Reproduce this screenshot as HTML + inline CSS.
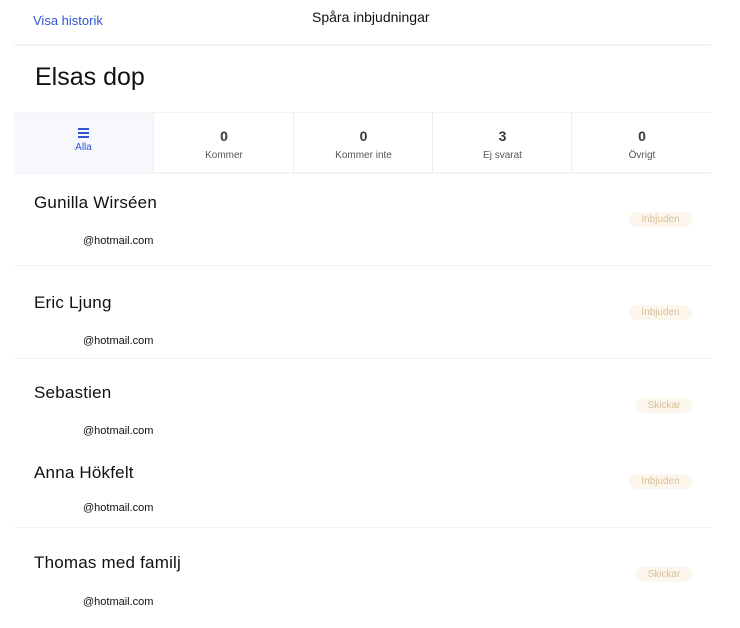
<!DOCTYPE html>
<html><head><style>
body{margin:0;width:740px;height:628px;background:#fff;font-family:"Liberation Sans",sans-serif;position:relative;overflow:hidden}
.a{position:absolute;white-space:nowrap}
.hr{position:absolute;left:14px;width:697px;height:2px;background:#f3f3f5}
.name{position:absolute;left:34px;font-size:17px;color:#111;letter-spacing:0.2px}
.mail{position:absolute;left:83px;font-size:11px;color:#111}
.badge{position:absolute;right:48px;height:15px;line-height:15px;border-radius:8px;background:#fcf6ec;color:#d8c09a;font-size:10px;text-align:center}
.col{position:absolute;top:113px;height:60px;text-align:center;border-left:1px solid #eceef2}
.col .n{position:absolute;top:15px;width:100%;font-size:14px;font-weight:bold;color:#333a48}
.col .l{position:absolute;top:36px;width:100%;font-size:10px;color:#555}
</style></head><body>
<div class="a" style="left:33px;top:13px;font-size:13px;color:#2f55d4">Visa historik</div>
<div class="a" style="left:312px;top:9px;font-size:14px;color:#111">Spåra inbjudningar</div>
<div class="hr" style="top:44px"></div>
<div class="a" style="left:35px;top:63px;font-size:25px;color:#111">Elsas dop</div>
<div class="hr" style="top:112px;height:1px"></div>
<div class="col" style="left:14px;width:139px;background:#f7f8fb;border-left:none">
<div style="position:absolute;left:64px;top:15px;width:11px">
<div style="height:1.5px;background:#2f55d4;margin-bottom:2.5px"></div><div style="height:1.5px;background:#2f55d4;margin-bottom:2.5px"></div><div style="height:1.5px;background:#2f55d4"></div></div>
<div class="l" style="top:29px;color:#2f55d4">Alla</div></div>
<div class="col" style="left:153px;width:140px"><div class="n">0</div><div class="l" style="top:37px">Kommer</div></div>
<div class="col" style="left:293px;width:139px"><div class="n">0</div><div class="l" style="top:37px">Kommer inte</div></div>
<div class="col" style="left:432px;width:139px"><div class="n">3</div><div class="l" style="top:37px">Ej svarat</div></div>
<div class="col" style="left:571px;width:140px"><div class="n">0</div><div class="l" style="top:37px">Övrigt</div></div>
<div class="hr" style="top:172px"></div>

<div class="name" style="top:193px">Gunilla Wirséen</div>
<div class="badge" style="top:212px;width:63px">Inbjuden</div>
<div class="mail" style="top:235px">@hotmail.com</div>
<div class="hr" style="top:265px;height:1px"></div>

<div class="name" style="top:293px">Eric Ljung</div>
<div class="badge" style="top:305px;width:63px">Inbjuden</div>
<div class="mail" style="top:335px">@hotmail.com</div>
<div class="hr" style="top:358px;height:1px"></div>

<div class="name" style="top:383px">Sebastien</div>
<div class="badge" style="top:398px;width:56px">Skickar</div>
<div class="mail" style="top:425px">@hotmail.com</div>

<div class="name" style="top:463px">Anna Hökfelt</div>
<div class="badge" style="top:474px;width:63px">Inbjuden</div>
<div class="mail" style="top:502px">@hotmail.com</div>
<div class="hr" style="top:527px;height:1px"></div>

<div class="name" style="top:553px">Thomas med familj</div>
<div class="badge" style="top:567px;width:56px">Skickar</div>
<div class="mail" style="top:596px">@hotmail.com</div>
</body></html>
